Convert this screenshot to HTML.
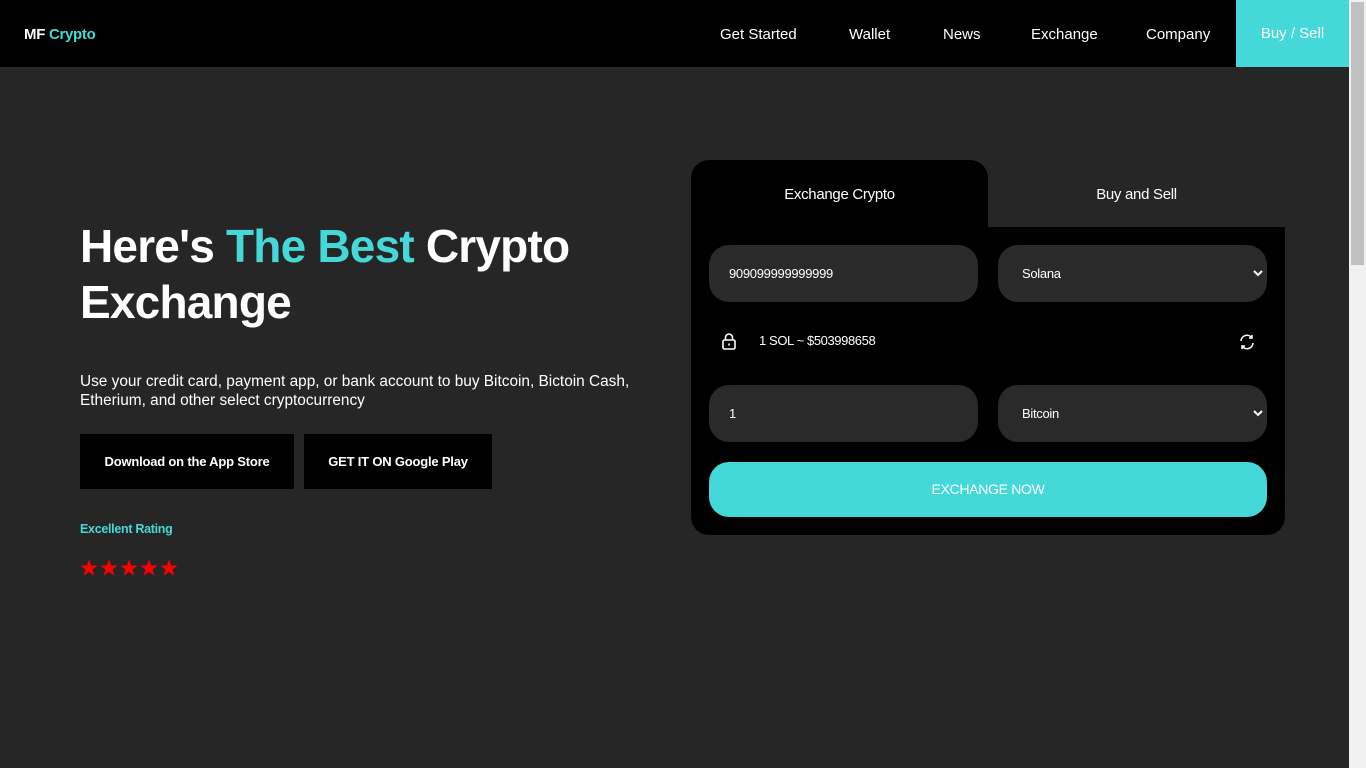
<!DOCTYPE html>
<html><head><meta charset="utf-8"><style>
*{box-sizing:border-box;margin:0;padding:0}
body{width:1366px;height:768px;overflow:hidden;background:#262626;font-family:"Liberation Sans",sans-serif;color:#fff;position:relative}
.nav{position:absolute;left:0;top:0;width:1349px;height:67px;background:#000}
.logo{position:absolute;left:24px;top:26px;font-weight:bold;font-size:15px;letter-spacing:-0.3px}
.nav a{position:absolute;top:26px;font-size:15px;color:#fff;text-decoration:none}
.buy{position:absolute;left:1236px;top:0;width:113px;height:67px;background:#45d8d8;font-size:15px;text-align:center;line-height:68px}
.sb{position:absolute;left:1349px;top:0;width:17px;height:768px;background:#f1f1f1}
.sb div{position:absolute;left:2px;top:2px;width:13px;height:263px;background:#c1c1c1}
h1{position:absolute;left:80px;top:218px;font-size:46px;line-height:56px;font-weight:bold;letter-spacing:-0.8px}
.c{color:#45d8d8}
.p{position:absolute;left:80px;top:372px;font-size:15.4px;line-height:19px;width:580px}
.btn{position:absolute;top:434px;height:55px;background:#000;font-weight:bold;font-size:13px;text-align:center;line-height:55px;letter-spacing:-0.2px}
.rate{position:absolute;left:80px;top:522px;font-size:12.5px;color:#45d8d8;font-weight:bold;letter-spacing:-0.3px}
.card{position:absolute;left:691px;top:227px;width:594px;height:308px;background:#000;border-radius:0 0 18px 18px}
.tab{position:absolute;left:691px;top:160px;width:297px;height:70px;background:#000;border-radius:18px 18px 0 0;text-align:center;line-height:70px;font-size:15px;letter-spacing:-0.3px}
.tab2{position:absolute;left:988px;top:160px;width:297px;height:67px;text-align:center;line-height:70px;font-size:15px;letter-spacing:-0.3px}
.in{position:absolute;width:269px;height:57px;background:#2a2a2a;border-radius:20px;font-size:13px;line-height:57px;padding-left:20px;letter-spacing:-0.3px}
.in.s{padding-left:24px}
.chev{position:absolute;right:3px;top:23px}
.ex{position:absolute;left:709px;top:462px;width:558px;height:55px;background:#45d8d8;border-radius:20px;text-align:center;line-height:55px;font-size:14px;letter-spacing:-0.3px}
</style></head><body>
<div class="nav"><div class="logo">MF <span class="c">Crypto</span></div>
<a style="left:720px">Get Started</a><a style="left:849px">Wallet</a><a style="left:943px">News</a><a style="left:1031px">Exchange</a><a style="left:1146px">Company</a>
<div class="buy">Buy / Sell</div></div>
<div class="sb"><div></div></div>
<h1>Here's <span class="c">The Best</span> Crypto<br>Exchange</h1>
<div class="p">Use your credit card, payment app, or bank account to buy Bitcoin, Bictoin Cash, Etherium, and other select cryptocurrency</div>
<div class="btn" style="left:80px;width:214px">Download on the App Store</div>
<div class="btn" style="left:304px;width:188px">GET IT ON Google Play</div>
<div class="rate">Excellent Rating</div>
<svg style="position:absolute;left:80px;top:559px" width="100" height="18" viewBox="0 0 100 18" fill="#f00">
<defs><path id="s" d="M9 0.5l2.2 5.9 6.3 0.2-5 3.9 1.8 6.1L9 13l-5.3 3.6 1.8-6.1-5-3.9 6.3-0.2z"/></defs>
<use href="#s" x="0"/><use href="#s" x="20"/><use href="#s" x="40"/><use href="#s" x="60"/><use href="#s" x="80"/></svg>
<div class="card"></div>
<div class="tab">Exchange Crypto</div>
<div class="tab2">Buy and Sell</div>
<div class="in" style="left:709px;top:245px">909099999999999</div>
<div class="in s" style="left:998px;top:245px">Solana<svg class="chev" width="12" height="10" viewBox="0 0 12 10" fill="none" stroke="#fff" stroke-width="2"><path d="M2 3l4 4 4-4"/></svg></div>
<svg style="position:absolute;left:720px;top:332px" width="18" height="18" viewBox="0 0 18 18" fill="none" stroke="#fff" stroke-width="1.6"><rect x="3" y="8" width="12" height="9" rx="1.5"/><path d="M5.5 8V5.5a3.5 3.5 0 0 1 7 0V8"/><path d="M9 11.5v2"/></svg>
<div style="position:absolute;left:759px;top:333px;font-size:13px;letter-spacing:-0.4px">1 SOL ~ $503998658</div>
<svg style="position:absolute;left:1238px;top:333px" width="18" height="18" viewBox="0 0 18 18" fill="none" stroke="#fff" stroke-width="1.6"><path d="M3 8a6 6 0 0 1 11-3M15 10a6 6 0 0 1-11 3"/><path d="M14 2v3h-3M4 16v-3h3"/></svg>
<div class="in" style="left:709px;top:385px">1</div>
<div class="in s" style="left:998px;top:385px">Bitcoin<svg class="chev" width="12" height="10" viewBox="0 0 12 10" fill="none" stroke="#fff" stroke-width="2"><path d="M2 3l4 4 4-4"/></svg></div>
<div class="ex">EXCHANGE NOW</div>
</body></html>
